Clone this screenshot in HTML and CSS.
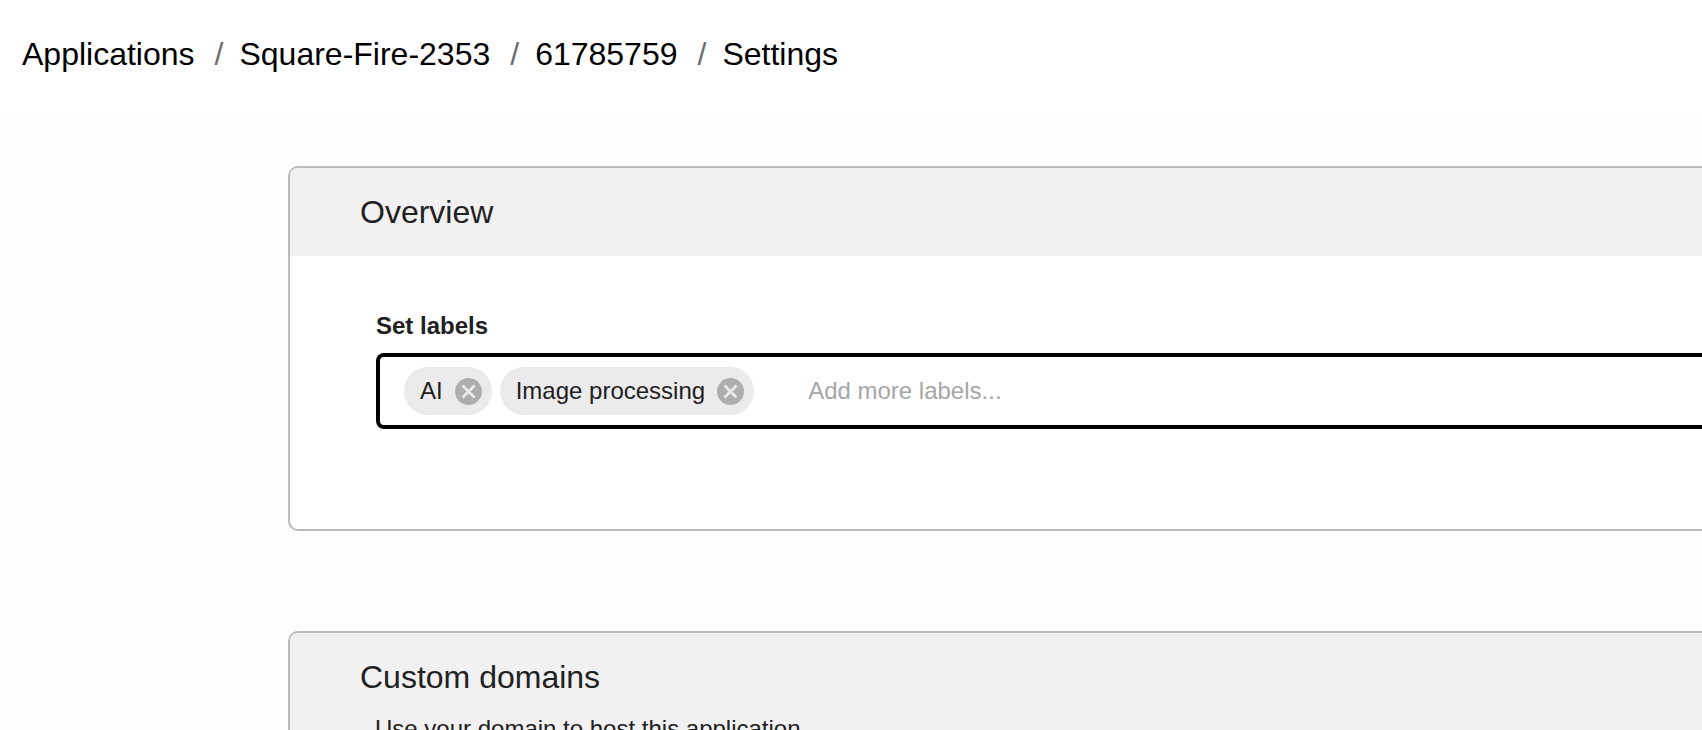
FILE: index.html
```html
<!DOCTYPE html>
<html lang="en">
<head>
<meta charset="utf-8">
<title>Settings</title>
<link rel="stylesheet" href="styles.css">
</head>
<body>
<header class="topbar">
  <nav aria-label="Breadcrumb">
    <ol class="crumbs">
      <li><a href="#">Applications</a></li>
      <li class="sep" aria-hidden="true">/</li>
      <li><a href="#">Square-Fire-2353</a></li>
      <li class="sep" aria-hidden="true">/</li>
      <li><a href="#">61785759</a></li>
      <li class="sep" aria-hidden="true">/</li>
      <li><a href="#">Settings</a></li>
    </ol>
  </nav>
</header>
<main class="content">
  <section class="card">
    <div class="card-head">
      <h2>Overview</h2>
    </div>
    <div class="card-body">
      <label class="field-label" for="labels">Set labels</label>
      <div class="tag-field">
        <span class="chip">AI
          <button class="chip-remove" type="button" aria-label="Remove AI">
            <svg viewBox="0 0 27 27" aria-hidden="true"><circle cx="13.5" cy="13.5" r="13.5" fill="#aeaeae"/><path d="M7.5 7.5l12 12M19.5 7.5l-12 12" stroke="#ebebeb" stroke-width="2.8"/></svg>
          </button>
        </span>
        <span class="chip">Image processing
          <button class="chip-remove" type="button" aria-label="Remove Image processing">
            <svg viewBox="0 0 27 27" aria-hidden="true"><circle cx="13.5" cy="13.5" r="13.5" fill="#aeaeae"/><path d="M7.5 7.5l12 12M19.5 7.5l-12 12" stroke="#ebebeb" stroke-width="2.8"/></svg>
          </button>
        </span>
        <input class="tag-input" id="labels" type="text" placeholder="Add more labels...">
      </div>
    </div>
  </section>
  <section class="card">
    <div class="card-head">
      <h2>Custom domains</h2>
      <p>Use your domain to host this application</p>
    </div>
  </section>
</main>
</body>
</html>
```
FILE: styles.css
```css
* {
  box-sizing: border-box;
}

html {
  height: 100%;
  overflow: hidden;
}

body {
  margin: 0;
  height: 100%;
  overflow: hidden;
  background: #fdfdfd;
  color: #212121;
  font: 24px/28px "Liberation Sans", Arial, sans-serif;
}

.topbar {
  padding: 36px 22px 46px;
  background: #fff;
}

.crumbs {
  display: flex;
  margin: 0;
  padding: 0;
  list-style: none;
  font-size: 32px;
  line-height: 36px;
}

.crumbs a {
  color: #000;
  text-decoration: none;
}

.sep {
  padding: 0 16px 0 20px;
  color: #6e6e6e;
}

.content {
  display: flex;
  flex-direction: column;
  gap: 100px;
  padding: 48px 0 0 288px;
}

.card {
  overflow: hidden;
  background: #fff;
  border: 2px solid #bababa;
  border-right: 0;
  border-radius: 10px 0 0 10px;
}

.card-head {
  padding: 26px 70px;
  background: #f1f1f1;
}

.card-head h2 {
  margin: 0;
  font-size: 32px;
  font-weight: 400;
  line-height: 36px;
}

.card-head p {
  margin: 20px 0 0;
  padding-left: 15px;
}

.card-body {
  padding: 56px 0 100px 86px;
}

.field-label {
  display: block;
  margin-bottom: 13px;
  font-weight: 700;
}

.tag-field {
  display: flex;
  align-items: center;
  gap: 8px;
  padding: 10px 24px;
  border: 4px solid #000;
  border-right: 0;
  border-radius: 8px 0 0 8px;
}

.chip {
  display: flex;
  flex: none;
  align-items: center;
  gap: 12px;
  padding: 10px 10px 10px 16px;
  border-radius: 24px;
  background: #ebebeb;
}

.chip-remove {
  width: 27px;
  height: 27px;
  padding: 0;
  border: 0;
  background: none;
}

.chip-remove svg {
  display: block;
}

.tag-input {
  flex: 1;
  min-width: 0;
  margin-left: 46px;
  padding: 0;
  border: 0;
  outline: 0;
  background: none;
  color: inherit;
  font: inherit;
}

.tag-input::placeholder {
  color: #a6a6a6;
  opacity: 1;
}
```
